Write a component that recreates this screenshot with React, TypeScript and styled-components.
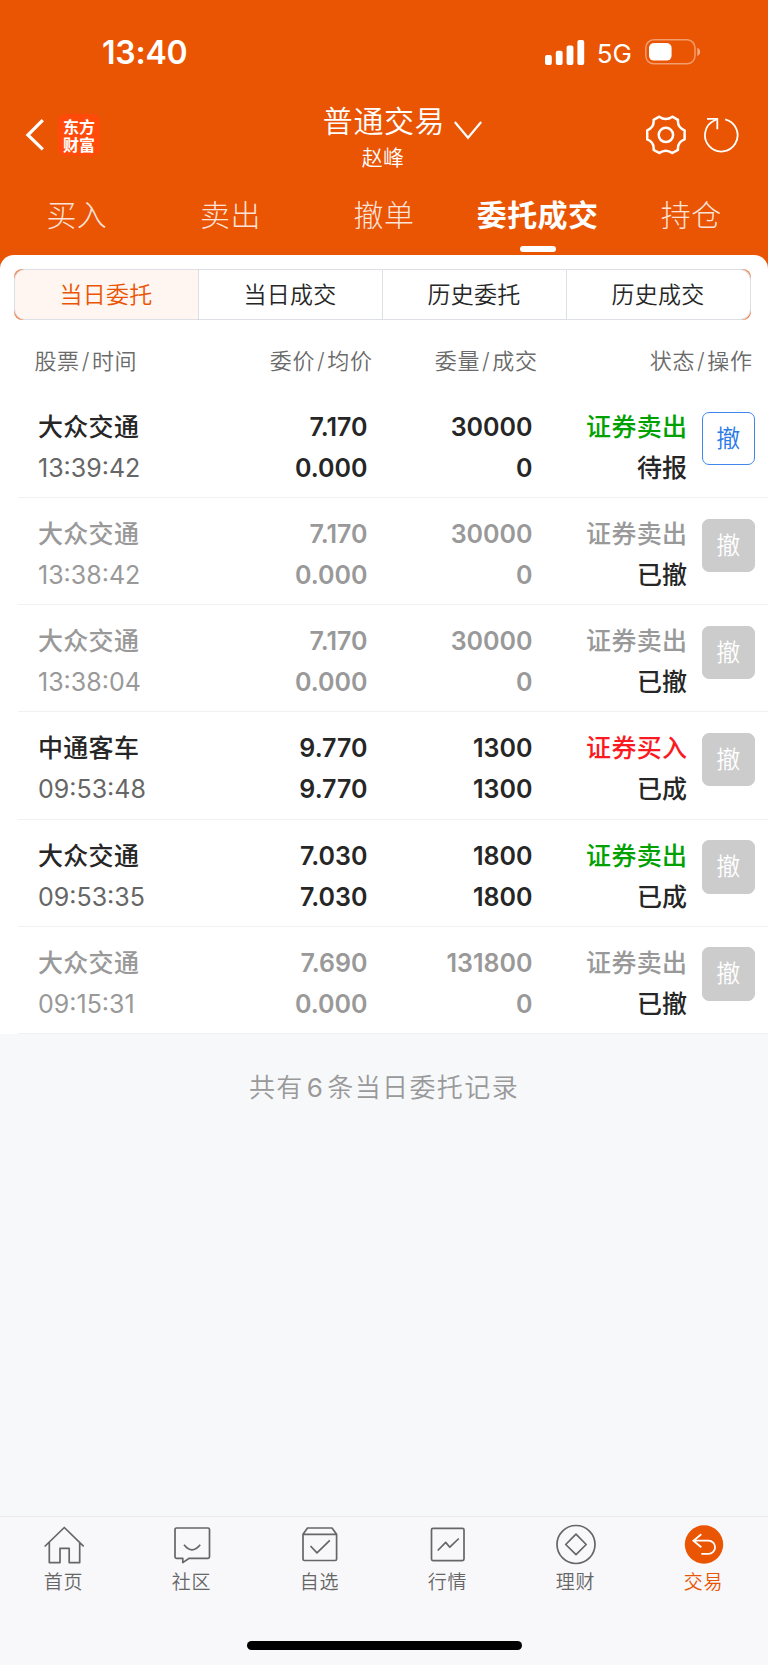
import React from "react";
import styled, { createGlobalStyle } from "styled-components";

const ORANGE = "#ea5504";

const GlobalStyle = createGlobalStyle`
  * { box-sizing: border-box; }
  body {
    margin: 0;
    background: #f7f8fa;
    font-family: Inter, "Noto Sans CJK SC", sans-serif;
    color: #262626;
  }
`;

const Screen = styled.div`
  display: flex;
  flex-direction: column;
  width: 768px;
  height: 1665px;
  overflow: hidden;
  background: #f7f8fa;
`;

const Top = styled.header`
  flex: none;
  height: 269px;
  margin-bottom: -14px;
  background: ${ORANGE};
  color: #fff;
`;

const StatusBar = styled.div`
  display: flex;
  align-items: center;
  height: 104px;
  padding: 0 67px 0 102px;
`;

const Clock = styled.time`
  flex: 1;
  padding-top: 2px;
  font-size: 32px;
  font-weight: 600;
  line-height: 40px;
  letter-spacing: -0.2px;
`;

const Network = styled.span`
  margin: 3px 13px 0 12px;
  font-size: 26px;
  line-height: 30px;
`;

const NavBar = styled.div`
  display: grid;
  grid-template-columns: 1fr auto 1fr;
  align-items: center;
  height: 66px;
  margin-top: -2px;
  padding: 0 28px 0 24px;
`;

const NavLeft = styled.div`
  display: flex;
  align-items: center;
  gap: 13px;
  margin-top: -8px;
`;

const NavRight = styled.div`
  display: flex;
  align-items: center;
  justify-content: flex-end;
  gap: 18px;
  margin-top: -8px;
`;

const Logo = styled.div`
  width: 42px;
  height: 42px;
  padding: 3px 4px 0 5px;
  border-radius: 8px;
  background: #ff4a0a;
  font-family: "Noto Sans CJK SC", sans-serif;
  font-size: 16px;
  font-weight: 700;
  line-height: 18px;
  word-break: break-all;
`;

const TitleBlock = styled.div`
  display: flex;
  flex-direction: column;
  align-items: center;
`;

const Title = styled.h1`
  display: flex;
  align-items: center;
  gap: 9px;
  margin: 0 0 0 41px;
  font-size: 30px;
  font-weight: 350;
  line-height: 38px;
  letter-spacing: 0.6px;
  white-space: nowrap;

  svg { margin-top: 18px; }
`;

const Account = styled.div`
  margin-left: 2px;
  padding-top: 1px;
  font-size: 21px;
  font-weight: 350;
  line-height: 34px;
  letter-spacing: 0.3px;
`;

const Tabs = styled.nav`
  display: flex;
  height: 87px;
`;

const Tab = styled.div<{ $active?: boolean }>`
  display: flex;
  flex: 1;
  flex-direction: column;
  align-items: center;
  padding-top: 25px;
  font-size: 30px;
  font-weight: ${(p) => (p.$active ? 600 : 300)};
  line-height: 44px;
  letter-spacing: 0.4px;
  white-space: nowrap;
  color: ${(p) => (p.$active ? "#fff" : "rgba(255, 255, 255, 0.85)")};

  &::after {
    content: "";
    width: 36px;
    height: 6px;
    margin-top: 9px;
    border-radius: 3px;
    background: ${(p) => (p.$active ? "#fff" : "transparent")};
  }
`;

const Panel = styled.main`
  flex: none;
  height: 779px;
  padding-top: 14px;
  border-radius: 14px 14px 0 0;
  background: #fff;
`;

const Segments = styled.div`
  display: flex;
  height: 51px;
  margin: 0 17px 0 14px;
  border-radius: 8px;
  background: #f08a55;
`;

const Segment = styled.div<{ $active?: boolean }>`
  flex: 1;
  padding-right: 1px;
  border: 1px solid #dcdfe6;
  border-left-width: ${(p) => (p.$active ? 1 : 0)}px;
  background: ${(p) => (p.$active ? "#fff5f1" : "#fff")};
  color: ${(p) => (p.$active ? ORANGE : "#262626")};
  font-size: 23px;
  font-weight: 350;
  line-height: 50px;
  letter-spacing: 0.3px;
  text-align: center;

  &:first-child { border-radius: 11px 0 0 11px; }
  &:last-child { border-radius: 0 11px 11px 0; }
`;

const HeadRow = styled.div`
  display: grid;
  grid-template-columns: 190px 148px 165px 215px;
  height: 71px;
  padding-left: 34.5px;
  font-size: 22px;
  font-weight: 350;
  line-height: 82px;
  letter-spacing: 0.6px;
  color: #6a6a6a;
`;

const HeadCell = styled.div<{ $right?: boolean }>`
  text-align: ${(p) => (p.$right ? "right" : "left")};
`;

const Slash = styled.span`
  margin: 0 2px;
`;

const Row = styled.div<{ $muted?: boolean }>`
  display: grid;
  grid-template-columns: 182px 147.5px 165px 154.5px 69px;
  height: 107.15px;
  margin-left: 18px;
  padding: 16px 0 0 20px;
  border-bottom: 1px solid #f1f1f2;
  color: ${(p) => (p.$muted ? "#999" : "#262626")};
`;

const Cell = styled.div<{ $right?: boolean }>`
  display: flex;
  flex-direction: column;
  align-items: ${(p) => (p.$right ? "flex-end" : "flex-start")};
  font-size: 25px;
  font-weight: 600;
  line-height: 41px;
  white-space: nowrap;
`;

const Name = styled.span`
  font-weight: 500;
  letter-spacing: 0.3px;
`;

const Time = styled.span<{ $muted?: boolean }>`
  font-weight: 400;
  color: ${(p) => (p.$muted ? "#999" : "#666")};
`;

const Side = styled.span<{ $color: string }>`
  margin-right: -0.3px;
  font-weight: 500;
  letter-spacing: 0.3px;
  color: ${(p) => p.$color};
`;

const State = styled.span`
  font-weight: 500;
  color: #262626;
`;

const CancelButton = styled.button<{ $enabled?: boolean }>`
  width: 53.5px;
  height: 53.5px;
  margin: 4.5px 0 0 14.5px;
  padding: 1px 0 0;
  border: 1.5px solid ${(p) => (p.$enabled ? "#3f87ee" : "#ccc")};
  border-radius: 7px;
  background: ${(p) => (p.$enabled ? "#fff" : "#ccc")};
  color: ${(p) => (p.$enabled ? "#2a7ae8" : "#fff")};
  font-family: inherit;
  font-size: 24px;
  font-weight: 350;
  line-height: 50px;
`;

const Summary = styled.p`
  flex: 1;
  margin: 34px 0 0;
  font-size: 26px;
  font-weight: 350;
  line-height: 40px;
  letter-spacing: 1.4px;
  text-align: center;
  color: #999;
`;

const Count = styled.span`
  margin: 0 3px;
  font-weight: 400;
`;

const BottomNav = styled.nav`
  display: flex;
  flex: none;
  height: 109px;
  padding-top: 6px;
  border-top: 1px solid #e9eaec;
  background: #f8f8fb;
`;

const NavItem = styled.div<{ $active?: boolean }>`
  display: flex;
  flex: 1;
  flex-direction: column;
  align-items: center;
  font-size: 19px;
  font-weight: 350;
  line-height: 30px;
  color: ${(p) => (p.$active ? ORANGE : "#666")};

  svg { margin-bottom: 2px; }
`;

const NavLabel = styled.span`
  margin-right: 1px;
  letter-spacing: 0.8px;
`;

const HomeArea = styled.div`
  flex: none;
  height: 40px;
  padding-top: 16px;
  background: #f8f8fb;
`;

const HomeIndicator = styled.div`
  width: 275px;
  height: 9px;
  margin: 0 auto;
  border-radius: 5px;
  background: #000;
`;

const SignalIcon = () => (
  <svg width="40" height="25" viewBox="0 0 40 25" fill="#fff">
    <rect x="0" y="15" width="6.8" height="10" rx="2" />
    <rect x="10.8" y="10.8" width="6.8" height="14.2" rx="2" />
    <rect x="21.6" y="5.6" width="6.8" height="19.4" rx="2" />
    <rect x="32.4" y="0" width="6.8" height="25" rx="2" />
  </svg>
);

const BatteryIcon = () => (
  <svg width="56" height="26" viewBox="0 0 56 26">
    <rect x="0.8" y="0.8" width="49.2" height="24" rx="8" fill="none" stroke="#fff" strokeOpacity="0.42" strokeWidth="1.5" />
    <rect x="4" y="4" width="22.6" height="17.6" rx="5" fill="#fff" />
    <path d="M52.3 8.8c3.8 1.7 3.8 6.5 0 8.2z" fill="#fff" fillOpacity="0.5" />
  </svg>
);

const BackIcon = () => (
  <svg width="21" height="34" viewBox="0 0 21 34" fill="none" stroke="#fff" strokeWidth="3.2">
    <path d="M18.8 2.2 3.9 17l14.9 14.3" />
  </svg>
);

const DownIcon = () => (
  <svg width="28" height="20" viewBox="0 0 28 20" fill="none" stroke="#fff" strokeWidth="2.2">
    <path d="M.8 2 14 17.8 27.2 2" />
  </svg>
);

const SettingsIcon = () => (
  <svg width="40" height="40" viewBox="0 0 40 40" fill="none" stroke="#fff" strokeWidth="2.5" strokeLinejoin="round">
    <path d="M13.3 1.7Q19.8 6.3 26.3 1.7L32 4.8Q31.2 12.6 38.6 15.3V24.3Q31.2 27 32 34.9L26.3 38Q19.8 33.4 13.3 38L7.6 34.9Q8.4 27 1.2 24.3V15.3Q8.4 12.6 7.6 4.8Z" />
    <circle cx="19.9" cy="19.9" r="7.2" />
  </svg>
);

const RefreshIcon = () => (
  <svg width="36" height="36" viewBox="0 0 36 36" fill="none" stroke="#fff" strokeWidth="1.8">
    <path d="M21.2 2.4A16.3 16.3 0 1 1 10.3 3.500L13 2.2" />
    <path d="M3 1.9h10.3v10.3" />
  </svg>
);

const iconProps = {
  width: 40,
  height: 43,
  viewBox: "0 0 40 43",
  fill: "none",
  stroke: "#666",
  strokeWidth: 1.7,
  strokeLinejoin: "round" as const,
};

const HomeIcon = () => (
  <svg {...iconProps}>
    <path d="M.7 23.5 20.3 4.5 39.7 23.5M5.3 19.5V39.6H16V25.3h9.2v14.3h10.5V19.5" />
  </svg>
);

const CommunityIcon = () => (
  <svg {...iconProps}>
    <path d="M4.5 5H36a1.5 1.5 0 0 1 1.5 1.5V33.8a1.5 1.5 0 0 1-1.5 1.5H17.2L10.8 39.6V35.3H4.5A1.5 1.5 0 0 1 3 33.8V6.5A1.5 1.5 0 0 1 4.5 5Z" />
    <path d="M12 21.8Q20 32 28.2 21.8" />
  </svg>
);

const WatchlistIcon = () => (
  <svg {...iconProps}>
    <path d="M3 11.3 7.5 5H32l4.6 6.3V36a1.5 1.5 0 0 1-1.5 1.5H4.5A1.5 1.5 0 0 1 3 36ZM3 11.3H36.6M10.5 23 17 29.8 29.8 17.4" />
  </svg>
);

const MarketIcon = () => (
  <svg {...iconProps}>
    <rect x="3.5" y="5.3" width="32.5" height="32.3" rx="1.5" />
    <path d="M9.7 27.5 17.7 19.4 21.8 24.2 30.8 15.5" />
  </svg>
);

const WealthIcon = () => (
  <svg {...iconProps}>
    <circle cx="20" cy="21.5" r="19" />
    <path d="M20 11.2 30.2 21.5 20 31.7 9.7 21.5Z" />
  </svg>
);

const TradeIcon = () => (
  <svg {...iconProps} stroke="#fff" strokeWidth={1.8}>
    <circle cx="20" cy="21.5" r="19.2" fill={ORANGE} stroke="none" />
    <path d="M17.3 11.3 9.4 17.7 17.3 24.3M9.4 17.7H24.5a6.6 6.6 0 0 1 0 13.2H17.3" strokeLinejoin="miter" />
  </svg>
);

type Order = {
  name: string;
  time: string;
  price: string;
  average: string;
  amount: string;
  filled: string;
  side: "证券卖出" | "证券买入";
  state: string;
  muted?: boolean;
  cancellable?: boolean;
};

const orders: Order[] = [
  { name: "大众交通", time: "13:39:42", price: "7.170", average: "0.000", amount: "30000", filled: "0", side: "证券卖出", state: "待报", cancellable: true },
  { name: "大众交通", time: "13:38:42", price: "7.170", average: "0.000", amount: "30000", filled: "0", side: "证券卖出", state: "已撤", muted: true },
  { name: "大众交通", time: "13:38:04", price: "7.170", average: "0.000", amount: "30000", filled: "0", side: "证券卖出", state: "已撤", muted: true },
  { name: "中通客车", time: "09:53:48", price: "9.770", average: "9.770", amount: "1300", filled: "1300", side: "证券买入", state: "已成" },
  { name: "大众交通", time: "09:53:35", price: "7.030", average: "7.030", amount: "1800", filled: "1800", side: "证券卖出", state: "已成" },
  { name: "大众交通", time: "09:15:31", price: "7.690", average: "0.000", amount: "131800", filled: "0", side: "证券卖出", state: "已撤", muted: true },
];

const sideColor = (o: Order) =>
  o.muted ? "#999" : o.side === "证券买入" ? "#fb1a1f" : "#00a100";

const headings = [
  ["股票", "时间"],
  ["委价", "均价"],
  ["委量", "成交"],
  ["状态", "操作"],
];

const navItems = [
  { label: "首页", Icon: HomeIcon },
  { label: "社区", Icon: CommunityIcon },
  { label: "自选", Icon: WatchlistIcon },
  { label: "行情", Icon: MarketIcon },
  { label: "理财", Icon: WealthIcon },
  { label: "交易", Icon: TradeIcon, active: true },
];

export default function App() {
  return (
    <Screen>
      <GlobalStyle />
      <Top>
        <StatusBar>
          <Clock>13:40</Clock>
          <SignalIcon />
          <Network>5G</Network>
          <BatteryIcon />
        </StatusBar>
        <NavBar>
          <NavLeft>
            <BackIcon />
            <Logo>东方财富</Logo>
          </NavLeft>
          <TitleBlock>
            <Title>
              普通交易
              <DownIcon />
            </Title>
            <Account>赵峰</Account>
          </TitleBlock>
          <NavRight>
            <SettingsIcon />
            <RefreshIcon />
          </NavRight>
        </NavBar>
        <Tabs>
          {["买入", "卖出", "撤单", "委托成交", "持仓"].map((t) => (
            <Tab key={t} $active={t === "委托成交"}>{t}</Tab>
          ))}
        </Tabs>
      </Top>
      <Panel>
        <Segments>
          {["当日委托", "当日成交", "历史委托", "历史成交"].map((s, i) => (
            <Segment key={s} $active={i === 0}>{s}</Segment>
          ))}
        </Segments>
        <HeadRow>
          {headings.map(([a, b], i) => (
            <HeadCell key={a} $right={i > 0}>
              {a}<Slash>/</Slash>{b}
            </HeadCell>
          ))}
        </HeadRow>
        {orders.map((o) => (
          <Row key={o.time} $muted={o.muted}>
            <Cell>
              <Name>{o.name}</Name>
              <Time $muted={o.muted}>{o.time}</Time>
            </Cell>
            <Cell $right>
              <span>{o.price}</span>
              <span>{o.average}</span>
            </Cell>
            <Cell $right>
              <span>{o.amount}</span>
              <span>{o.filled}</span>
            </Cell>
            <Cell $right>
              <Side $color={sideColor(o)}>{o.side}</Side>
              <State>{o.state}</State>
            </Cell>
            <CancelButton $enabled={o.cancellable}>撤</CancelButton>
          </Row>
        ))}
      </Panel>
      <Summary>
        共有<Count>6</Count>条当日委托记录
      </Summary>
      <BottomNav>
        {navItems.map(({ label, Icon, active }) => (
          <NavItem key={label} $active={active}>
            <Icon />
            <NavLabel>{label}</NavLabel>
          </NavItem>
        ))}
      </BottomNav>
      <HomeArea>
        <HomeIndicator />
      </HomeArea>
    </Screen>
  );
}
